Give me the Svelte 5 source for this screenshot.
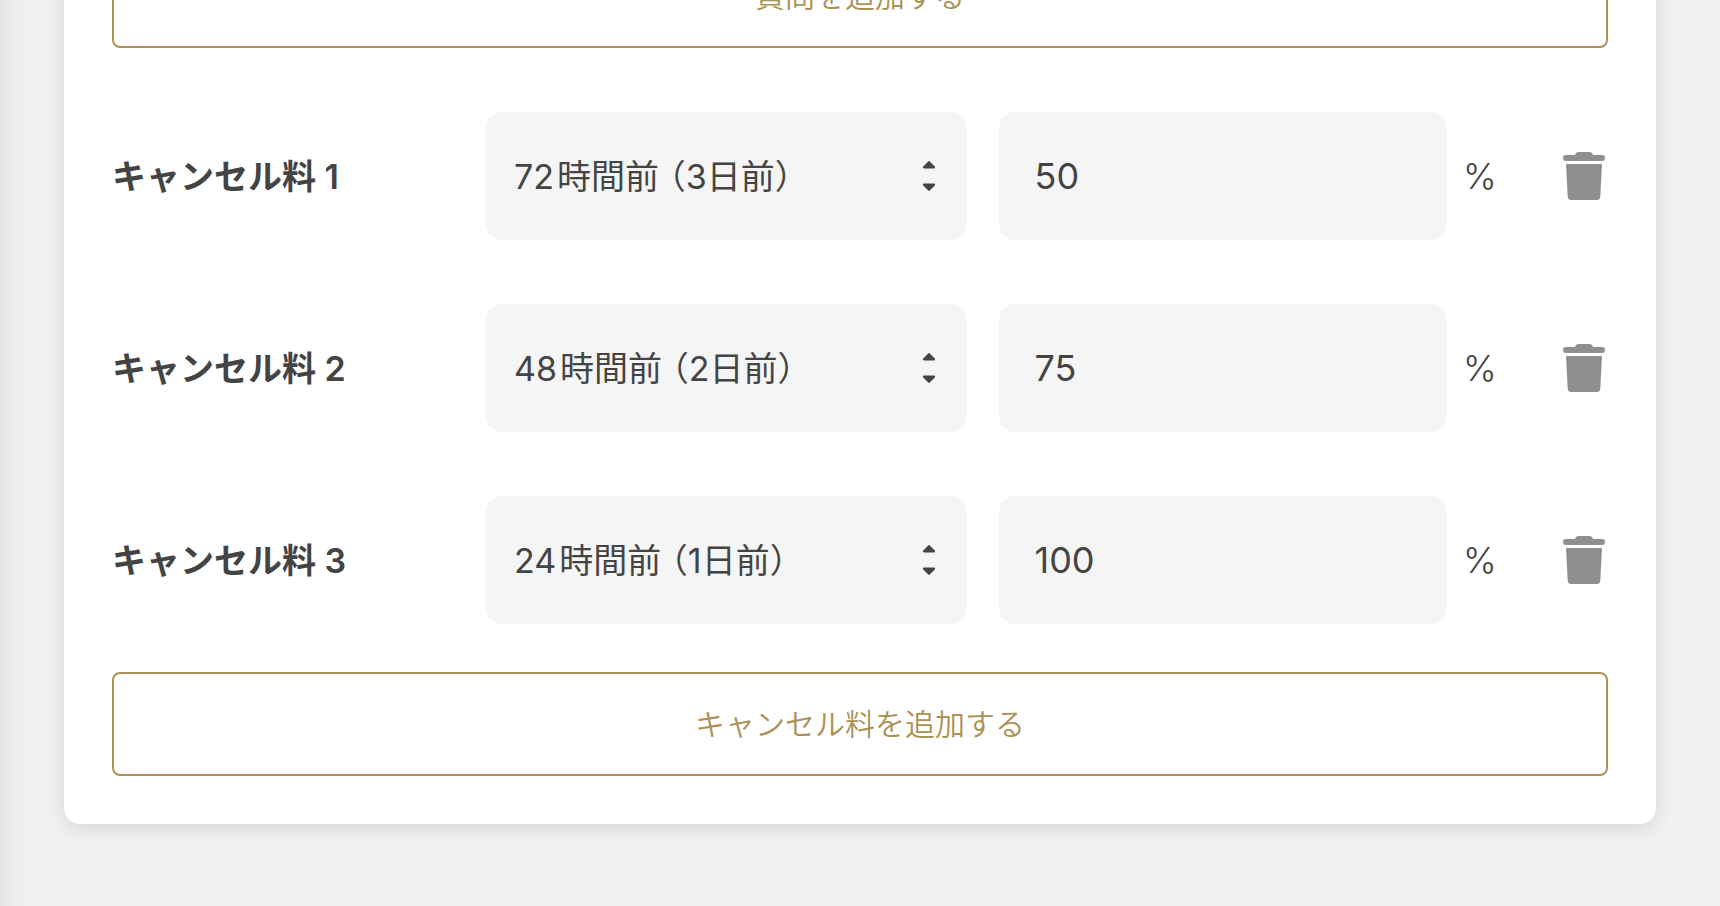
<script>
  let fees = $state([
    { id: 1, timing: '72', percent: '50' },
    { id: 2, timing: '48', percent: '75' },
    { id: 3, timing: '24', percent: '100' }
  ]);

  // A hair space sets the hours off from the kanji that follow.
  const timings = [
    { value: '72', text: '72\u200a時間前 （3日前）' },
    { value: '48', text: '48\u200a時間前 （2日前）' },
    { value: '24', text: '24\u200a時間前 （1日前）' }
  ];

  function addFee() {
    const id = Math.max(0, ...fees.map((fee) => fee.id)) + 1;
    fees.push({ id, timing: '24', percent: '100' });
  }

  function removeFee(id) {
    fees = fees.filter((fee) => fee.id !== id);
  }
</script>

<main class="page">
  <section class="card">
    <button class="add" type="button">質問を追加する</button>

    <div class="fees">
      {#each fees as fee, i (fee.id)}
        <div class="row">
          <label class="name" for="timing-{fee.id}">キャンセル料 {i + 1}</label>
          <div class="timing">
            <select class="field" id="timing-{fee.id}" bind:value={fee.timing}>
              {#each timings as timing}
                <option value={timing.value}>{timing.text}</option>
              {/each}
            </select>
            <svg class="arrows" viewBox="0 0 14 32" aria-hidden="true">
              <path d="M6.2 1.4Q7 .6 7.8 1.4L12.8 6.6Q13.8 8.4 12 8.4H2Q.2 8.4 1.2 6.6Z" />
              <path d="M6.2 30.6Q7 31.4 7.8 30.6L12.8 25.4Q13.8 23.6 12 23.6H2Q.2 23.6 1.2 25.4Z" />
            </svg>
          </div>
          <div class="amount">
            <input class="field" type="text" inputmode="numeric" aria-label="キャンセル料 {i + 1} %" bind:value={fee.percent} />
          </div>
          <span class="unit">%</span>
          <button class="remove" type="button" aria-label="削除" onclick={() => removeFee(fee.id)}>
            <svg viewBox="0 0 48 48" aria-hidden="true">
              <path d="M6 3H15Q16 0 18.5 0H29.5Q32 0 33 3H42Q45 3 45 6T42 9H6Q3 9 3 6T6 3Z" />
              <path d="M6 12H42L40.3 44.5Q40 48 36.5 48H11.5Q8 48 7.7 44.5Z" />
            </svg>
          </button>
        </div>
      {/each}
    </div>

    <button class="add" type="button" onclick={addFee}>キャンセル料を追加する</button>
  </section>
</main>

<style>
  :global(body) {
    margin: 0;
    background: #f1f1f1;
  }

  .page {
    box-sizing: border-box;
    display: flex;
    flex-direction: column;
    min-height: 100vh;
    padding: 0 64px 80px;
    background: linear-gradient(90deg, #e5e5e5 0, #ebebeb 12px, #efefef 24px, #f1f1f1 40px);
    color: #444;
    font-family: Inter, "Noto Sans CJK JP", sans-serif;
    font-size: 34px;
    font-weight: 350;
  }

  .card {
    display: flex;
    flex-direction: column;
    margin-top: -104px;
    padding: 48px;
    border-radius: 16px;
    background: #fff;
    box-shadow: 0 4px 20px rgba(0, 0, 0, 0.12);
  }

  .add {
    height: 104px;
    padding: 0 32px 4px;
    border: 2px solid #ab9154;
    border-radius: 8px;
    background: #fff;
    color: #ab9154;
    font: inherit;
    font-size: 30px;
    cursor: pointer;
  }

  .fees {
    display: flex;
    flex-direction: column;
    gap: 64px;
    padding: 64px 0 48px;
  }

  .row {
    display: flex;
    align-items: center;
  }

  .name {
    flex: none;
    width: 25%;
    padding-bottom: 4px;
    font-weight: 600;
  }

  .timing {
    position: relative;
    flex: 15;
    min-width: 0;
    margin-right: 32px;
  }

  .amount {
    flex: 14;
    min-width: 0;
  }

  .field {
    box-sizing: border-box;
    display: block;
    width: 100%;
    height: 128px;
    padding: 0 36px;
    border: 0;
    border-radius: 16px;
    background: #f5f5f5;
    color: inherit;
    font: inherit;
    font-weight: 400;
  }

  input.field {
    font-size: 36px;
  }

  select.field {
    appearance: none;
    padding: 0 64px 0 28px;
    font-feature-settings: "halt";
  }

  .arrows {
    position: absolute;
    top: 48px;
    right: 31px;
    width: 14px;
    height: 32px;
    fill: #444;
    pointer-events: none;
  }

  .unit {
    box-sizing: border-box;
    flex: none;
    width: 113px;
    padding-left: 16px;
    font-size: 36px;
  }

  .remove {
    flex: none;
    width: 48px;
    height: 48px;
    padding: 0;
    border: 0;
    background: none;
    cursor: pointer;
  }

  .remove svg {
    display: block;
    width: 48px;
    height: 48px;
    fill: #8f8f8f;
  }
</style>
